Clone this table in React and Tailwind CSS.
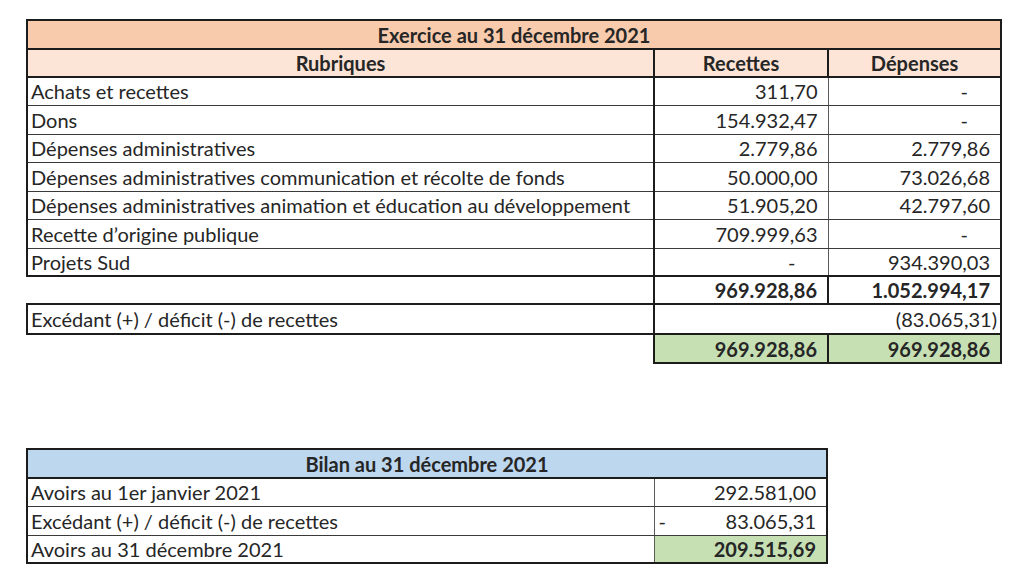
import React from "react";

const rows = [
  ["Achats et recettes", "311,70", "-"],
  ["Dons", "154.932,47", "-"],
  ["Dépenses administratives", "2.779,86", "2.779,86"],
  ["Dépenses administratives communication et récolte de fonds", "50.000,00", "73.026,68"],
  ["Dépenses administratives animation et éducation au développement", "51.905,20", "42.797,60"],
  ["Recette d’origine publique", "709.999,63", "-"],
  ["Projets Sud", "-", "934.390,03"],
];

export default function App() {
  return (
    <div
      className="w-[1024px] min-h-[578px] bg-white pl-[26px] pt-[19px] text-[#262626] text-[20px]"
      style={{ fontFamily: "Lato, 'Open Sans', sans-serif" }}
    >
      <table className="table-fixed border-collapse w-[974px] leading-none">
        <colgroup>
          <col className="w-[627px]" />
          <col className="w-[174px]" />
          <col className="w-[173px]" />
        </colgroup>
        <tbody>
          <tr className="h-[29px] bg-[#f8cbad]">
            <td colSpan={3} className="border-2 border-[#1c1c1c] text-center font-bold">
              Exercice au 31 décembre 2021
            </td>
          </tr>
          <tr className="h-[28px] bg-[#fce4d6] font-bold">
            <td className="border-2 border-[#1c1c1c] text-center">Rubriques</td>
            <td className="border-2 border-r-[1px] border-[#1c1c1c] border-r-[#5a5a5a] text-center">Recettes</td>
            <td className="border-2 border-[#1c1c1c] text-center">Dépenses</td>
          </tr>
          {rows.map((r, i) => (
            <tr key={i} className={i % 2 === 0 ? "h-[28px]" : "h-[29px]"}>
              <td className={`border-l-2 border-r-2 border-[#1c1c1c] pl-[3px] ${i === rows.length - 1 ? "border-b-2" : "border-b-[1px] border-b-[#3a3a3a]"}`}>
                {r[0]}
              </td>
              <td className={`border-r-[1px] border-r-[#5a5a5a] text-right ${r[1] === "-" ? "pr-[32px]" : "pr-[10px]"} ${i === rows.length - 1 ? "border-b-2 border-b-[#1c1c1c]" : "border-b-[1px] border-b-[#3a3a3a]"}`}>
                {r[1]}
              </td>
              <td className={`border-r-2 border-r-[#1c1c1c] text-right ${r[2] === "-" ? "pr-[32px]" : "pr-[10px]"} ${i === rows.length - 1 ? "border-b-2 border-b-[#1c1c1c]" : "border-b-[1px] border-b-[#3a3a3a]"}`}>
                {r[2]}
              </td>
            </tr>
          ))}
          <tr className="h-[28px] font-bold">
            <td></td>
            <td className="border-2 border-r-[1px] border-[#1c1c1c] border-r-[#5a5a5a] text-right pr-[10px]">969.928,86</td>
            <td className="border-2 border-[#1c1c1c] text-right pr-[10px]">1.052.994,17</td>
          </tr>
          <tr className="h-[30px]">
            <td className="border-2 border-[#1c1c1c] pl-[3px]">Excédant (+) / déficit (-) de recettes</td>
            <td colSpan={2} className="border-2 border-[#1c1c1c] text-right pr-[3px]">(83.065,31)</td>
          </tr>
          <tr className="h-[29px] font-bold">
            <td></td>
            <td className="border-2 border-r-[1px] border-[#1c1c1c] border-r-[#5a5a5a] bg-[#c6e0b4] text-right pr-[10px]">969.928,86</td>
            <td className="border-2 border-[#1c1c1c] bg-[#c6e0b4] text-right pr-[10px]">969.928,86</td>
          </tr>
        </tbody>
      </table>

      <table className="table-fixed border-collapse w-[800px] leading-none mt-[84px]">
        <colgroup>
          <col className="w-[627px]" />
          <col className="w-[173px]" />
        </colgroup>
        <tbody>
          <tr className="h-[29px] bg-[#bdd7ee]">
            <td colSpan={2} className="border-2 border-[#1c1c1c] text-center font-bold">
              Bilan au 31 décembre 2021
            </td>
          </tr>
          <tr className="h-[28px]">
            <td className="border-l-2 border-[#1c1c1c] border-b-[1px] border-b-[#3a3a3a] border-r-[1px] border-r-[#5a5a5a] pl-[3px]">Avoirs au 1er janvier 2021</td>
            <td className="border-r-2 border-r-[#1c1c1c] border-b-[1px] border-b-[#3a3a3a] text-right pr-[10px]">292.581,00</td>
          </tr>
          <tr className="h-[29px]">
            <td className="border-l-2 border-[#1c1c1c] border-b-[1px] border-b-[#3a3a3a] border-r-[1px] border-r-[#5a5a5a] pl-[3px]">Excédant (+) / déficit (-) de recettes</td>
            <td className="border-r-2 border-r-[#1c1c1c] border-b-[1px] border-b-[#3a3a3a] pr-[10px] pl-[4px]">
              <div className="flex justify-between">
                <span>-</span>
                <span>83.065,31</span>
              </div>
            </td>
          </tr>
          <tr className="h-[28px]">
            <td className="border-l-2 border-b-2 border-[#1c1c1c] border-r-[1px] border-r-[#5a5a5a] pl-[3px]">Avoirs au 31 décembre 2021</td>
            <td className="border-r-2 border-b-2 border-[#1c1c1c] bg-[#c6e0b4] text-right pr-[10px] font-bold">209.515,69</td>
          </tr>
        </tbody>
      </table>
    </div>
  );
}
